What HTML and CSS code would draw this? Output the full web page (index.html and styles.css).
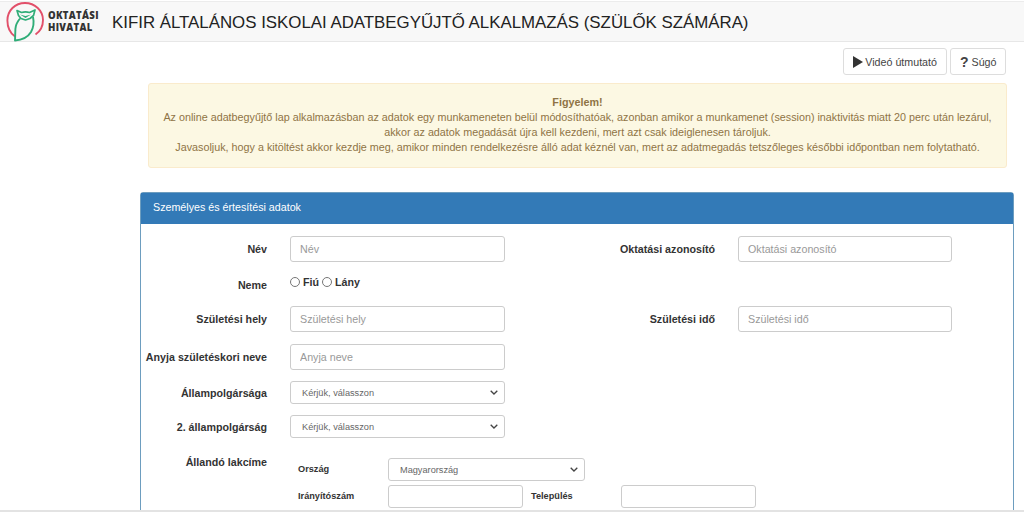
FILE: index.html
```html
<!DOCTYPE html>
<html lang="hu">
<head>
<meta charset="utf-8">
<title>KIFIR</title>
<link rel="stylesheet" href="styles.css">
</head>
<body>
<header class="topbar">
  <svg class="logo" viewBox="6 1 40 41" aria-hidden="true">
    <path d="M15 36.5C10 33 7.4 27 7.4 20.5 7.4 10.5 15 3 25 3 35 3 43 10.5 43 20 43 26.5 40 31.5 35.5 34.5" fill="none" stroke="#e2506a" stroke-width="1.9"/>
    <path d="M20 18.5C17.5 21.5 15.6 24.5 15.4 29L15 40.5C22 40 28 37 31 32 33.5 27.5 34 21.5 33 17" fill="none" stroke="#2fad78" stroke-width="1.9" stroke-linejoin="round"/>
    <path d="M17 10.5 21.5 12.5C24 11.8 27 11.8 29.5 12.5L35 10 33.5 15.5 30 18.5 25.5 20 21 18.5 18.5 15.5Z" fill="none" stroke="#2fad78" stroke-width="1.7" stroke-linejoin="round"/>
    <path d="M20 14.5 25.5 18 31 14.5 25.5 16Z" fill="#2fad78"/>
  </svg>
  <div class="logo-text"><span>OKTATÁSI</span><span>HIVATAL</span></div>
  <h1 class="app-title">KIFIR ÁLTALÁNOS ISKOLAI ADATBEGYŰJTŐ ALKALMAZÁS (SZÜLŐK SZÁMÁRA)</h1>
</header>

<div class="actions">
  <button class="btn btn-video" type="button"><svg class="ico-play" viewBox="0 0 10 12" aria-hidden="true"><path d="M0 0 10 6 0 12Z"/></svg>Videó útmutató</button>
  <button class="btn btn-help" type="button"><b class="ico-q">?</b>Súgó</button>
</div>

<main class="content">
  <section class="notice">
    <strong>Figyelem!</strong><br>
    Az online adatbegyűjtő lap alkalmazásban az adatok egy munkameneten belül módosíthatóak, azonban amikor a munkamenet (session) inaktivitás miatt 20 perc után lezárul,<br>
    akkor az adatok megadását újra kell kezdeni, mert azt csak ideiglenesen tároljuk.<br>
    Javasoljuk, hogy a kitöltést akkor kezdje meg, amikor minden rendelkezésre álló adat kéznél van, mert az adatmegadás tetszőleges későbbi időpontban nem folytatható.
  </section>

  <section class="panel">
    <div class="panel-head">Személyes és értesítési adatok</div>
    <form class="panel-body">
      <div class="row row-a">
        <label class="lbl">Név</label>
        <input class="field" placeholder="Név">
        <label class="lbl">Oktatási azonosító</label>
        <input class="field" placeholder="Oktatási azonosító">
      </div>
      <div class="row row-b">
        <label class="lbl lbl-neme">Neme</label>
        <div class="radios">
          <input class="radio" type="radio" name="n"><b>Fiú</b>
          <input class="radio" type="radio" name="n"><b>Lány</b>
        </div>
      </div>
      <div class="row row-c">
        <label class="lbl">Születési hely</label>
        <input class="field" placeholder="Születési hely">
        <label class="lbl">Születési idő</label>
        <input class="field" placeholder="Születési idő">
      </div>
      <div class="row row-d">
        <label class="lbl">Anyja születéskori neve</label>
        <input class="field" placeholder="Anyja neve">
      </div>
      <div class="row row-e">
        <label class="lbl lbl-sel">Állampolgársága</label>
        <select class="field sel"><option>Kérjük, válasszon</option></select>
      </div>
      <div class="row row-f">
        <label class="lbl lbl-sel">2. állampolgárság</label>
        <select class="field sel"><option>Kérjük, válasszon</option></select>
      </div>
      <div class="row row-g">
        <label class="lbl lbl-top">Állandó lakcíme</label>
        <div class="address">
          <label class="sub">Ország</label>
          <select class="field sel sel-wide"><option>Magyarország</option></select>
          <label class="sub">Irányítószám</label>
          <input class="field">
          <label class="sub">Település</label>
          <input class="field">
        </div>
      </div>
    </form>
  </section>
</main>
<div class="bottom-edge"></div>
</body>
</html>
```

FILE: styles.css
```css
* { box-sizing: border-box; }
html, body { height: 512px; overflow: hidden; }
body {
  margin: 0;
  background: #fff;
  color: #333;
  font-family: "Liberation Sans", Arial, sans-serif;
  font-size: 10.7px;
  line-height: 15px;
}
.topbar {
  margin-top: 1px;
  height: 41px;
  display: flex;
  align-items: center;
  background: #f8f8f8;
  border-top: 1px solid #ececec;
  border-bottom: 1px solid #e7e7e7;
  padding-left: 6px;
}
.logo { width: 40px; height: 41px; flex: none; }
.logo-text {
  display: flex;
  flex-direction: column;
  margin-left: 2px;
  margin-top: 1px;
  font-family: "Open Sans", "Liberation Sans", sans-serif;
  font-weight: 800;
  font-size: 9.6px;
  line-height: 12px;
  letter-spacing: .3px;
  color: #333;
  width: 58px;
}
.app-title {
  margin: 2px 0 0 6px;
  font-weight: 400;
  font-size: 16.85px;
  color: #222;
  white-space: nowrap;
}
.actions {
  display: flex;
  justify-content: flex-end;
  gap: 3px;
  padding: 6px 18px 0 0;
}
.btn {
  height: 27px;
  display: flex;
  align-items: center;
  background: #fff;
  border: 1px solid #ddd;
  border-radius: 3px;
  font: 10.7px "Liberation Sans", Arial, sans-serif;
  color: #444;
}
.btn-video { padding: 0 9.5px; }
.btn-help { padding: 0 8.5px; }
.ico-play { width: 10px; height: 12px; margin-right: 2px; fill: #333; }
.ico-q { font-size: 14px; margin-right: 3px; font-weight: 700; }
.content { margin: 8px 10px 0 140px; }
.notice {
  margin: 0 7px 0 8px;
  height: 85px;
  padding: 11px 10px;
  background: #fcf8e3;
  border: 1px solid #faebcc;
  border-radius: 3px;
  color: #8f7445;
  font-size: 10.77px;
  text-align: center;
  white-space: nowrap;
}
.panel {
  margin-top: 24px;
  border: 1px solid #6d9dbf;
  border-radius: 3px 3px 0 0;
  height: 340px;
}
.panel-head {
  height: 31px;
  padding: 7px 12px;
  background: #337ab7;
  color: #fff;
}
.panel-body { padding-top: 12px; }
.row {
  display: grid;
  grid-template-columns: 126px 238px 210px 237px;
  align-items: center;
}
.row > .field:nth-child(2) { margin-left: 23px; width: 215px; }
.row > .field:nth-child(4) { margin-left: 23px; width: 214px; }
.row-a { height: 26px; }
.row-b { height: 26px; margin-top: 7px; }
.row-c { height: 26px; margin-top: 11px; }
.row-d { height: 26px; margin-top: 12px; }
.row-e { height: 23px; margin-top: 11px; }
.row-f { height: 23px; margin-top: 11px; }
.row-g { align-items: start; margin-top: 9px; }
.row-g > .lbl { margin-top: 8px; }
.lbl {
  font-weight: 700;
  text-align: right;
  white-space: nowrap;
  display: block;
  color: #333;
}
.lbl-neme { margin-top: 7px; }
.lbl-sel { margin-top: 2px; }
.radios { margin-left: 23px; margin-top: 0; display: flex; align-items: center; }
.radio { width: 10px; height: 10px; margin: 0 3px 0 0; accent-color: #666; }
.radios b + .radio { margin-left: 3px; }
.field {
  height: 100%;
  padding: 0 9px;
  background: #fff;
  border: 1px solid #ccc;
  border-radius: 3px;
  font: 10.7px "Liberation Sans", Arial, sans-serif;
  color: #555;
  outline: none;
}
.field::placeholder { color: #999; opacity: 1; }
.sel {
  appearance: none;
  font-size: 9.2px;
  padding-left: 11px;
  color: #666;
  background: #fff url("data:image/svg+xml,%3Csvg xmlns='http://www.w3.org/2000/svg' width='8' height='5'%3E%3Cpath d='M.7.7 4 4 7.3.7' fill='none' stroke='%23444' stroke-width='1.3'/%3E%3C/svg%3E") no-repeat right 6px center;
}
.address {
  grid-column: 2 / 5;
  margin-left: 23px;
  margin-top: 11px;
  display: grid;
  grid-template-columns: 98px 135px 98px 135px;
  grid-template-rows: 23px 23px;
  row-gap: 4px;
  align-items: center;
}
.sub {
  font-size: 9.2px;
  font-weight: 700;
  padding-left: 8px;
  color: #333;
}
.address .sel-wide { grid-column: 2 / 5; width: 197px; }
.bottom-edge {
  position: fixed;
  left: 0;
  right: 0;
  bottom: 0;
  height: 2px;
  background: #e3e3e3;
}
```
